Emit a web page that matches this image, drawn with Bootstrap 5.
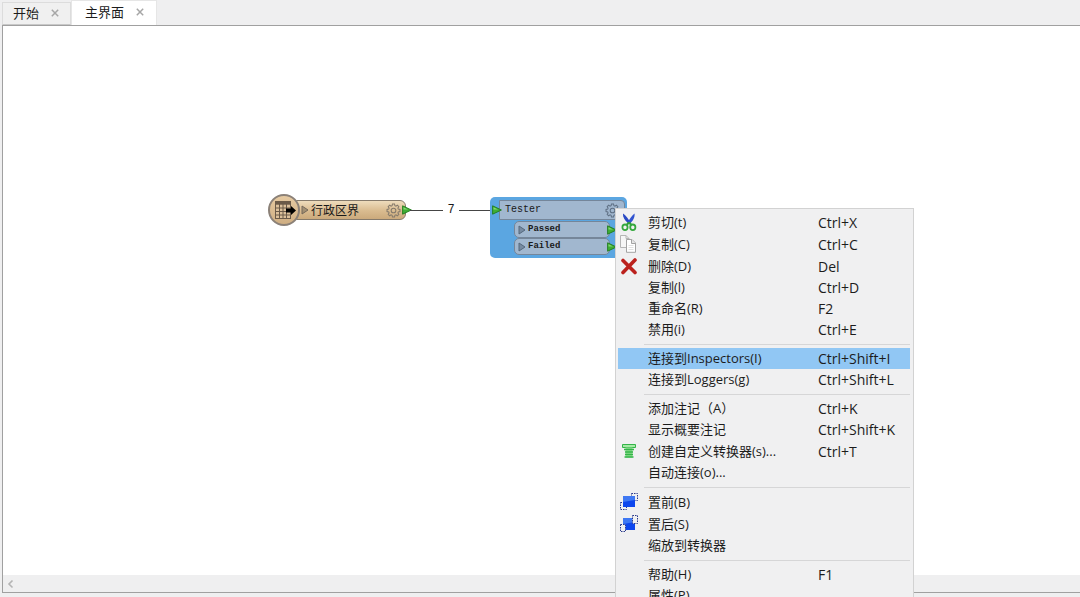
<!DOCTYPE html>
<html lang="zh-CN">
<head>
<meta charset="utf-8">
<meta name="viewport" content="width=device-width, initial-scale=1">
<title>主界面</title>
<link href="https://cdn.jsdelivr.net/npm/bootstrap@5.3.0/dist/css/bootstrap.min.css" rel="stylesheet">
<style>
  body { background: #efeff0; color: #1c1c1c; font: 13px/20px "Open Sans", "Noto Sans CJK SC", sans-serif; }
  button { font: inherit; color: inherit; }

  /* document tabs */
  .doc-tabs { height: 25px; padding: 0 0 0 2px; border: 0; }
  .doc-tab { height: 23px; padding: 0 7px 2px 10px; border: 1px solid #dcdcdc; border-bottom-color: #c8c8c8; background: #f0f0f0; }
  .doc-tab.current { height: 25px; padding: 0 8px 2px 13px; background: #fff; border-color: #e6e6e6; border-bottom: 0; }
  .doc-tab button { line-height: 20px; }
  .tab-close svg { display: block; width: 8px; height: 8px; }

  /* workspace canvas */
  .workspace { margin: 0 0 4px 2px; border: 1px solid #a0a0a0; border-right: 0; background: #fff; min-height: 0; }
  .hscroll { height: 17px; background: #efeff0; padding-left: 4px; }

  .flow-node { position: absolute; font-family: "Liberation Mono", "Noto Sans CJK SC", monospace; color: #1a1a1a; }
  .source-node { left: 265px; top: 168px; width: 144px; height: 32px; }
  .source-dial { width: 32px; height: 32px; border: 2px solid #8b8178; border-radius: 50%; background: linear-gradient(#e6caa2, #cfae82); z-index: 1; }
  .source-bar { height: 20px; margin-left: -4px; padding: 0 4px; border: 1px solid #857a6b; border-radius: 0 6px 6px 0; background: linear-gradient(#eedcbc, #d9bb8f 55%, #cbaa7c); font-size: 12px; line-height: 18px; font-family: "Noto Sans CJK SC", sans-serif; }
  .source-port { margin-left: -4px; }
  .wire { left: 407px; top: 174px; width: 82px; height: 20px; font-size: 12px; }
  .wire-line { height: 1px; background: #454545; }

  .tester-node { left: 487px; top: 171px; width: 137px; height: 61px; padding: 3px 2px 3px 2px; border-radius: 5px; background: #5ba6e1; }
  .tester-head { height: 20px; margin-left: -3px; padding: 0 4px 0 5px; border: 1px solid #75869a; border-radius: 0 4px 4px 0; background: #a1b7cf; font-size: 10px; line-height: 18px; }
  .tester-out { height: 17px; width: 96px; padding-left: 3px; border: 1px solid #75869a; border-radius: 5px; background: #a1b7cf; font-size: 9px; line-height: 15px; }
  .tester-ports { padding: 1px 0 0 22px; }
  .tester-ports .port { margin-left: -3px; }
  .port { width: 10px; height: 10px; flex: none; }
  .twisty { width: 8px; height: 10px; margin-right: 2px; flex: none; }
  .gear { width: 15px; height: 15px; flex: none; }

  /* context menu */
  .context-menu { position: absolute; left: 615px; top: 208px; width: 299px; padding: 2px 3px 2px 2px; background: #f0f0f1; border: 1px solid #d2d2d2; z-index: 5; }
  .menu-row { display: grid; grid-template-columns: 30px 170px 1fr; align-items: center; width: 100%; height: 21px; padding: 0; border: 0; background: transparent; text-align: left; line-height: 21px; white-space: nowrap; }
  .menu-row.with-icon { height: 22px; }
  .menu-row.hot { background: #91c7f4; }
  .menu-key { font-size: 14px; }
  .menu-icon { display: block; width: 18px; height: 18px; margin-left: 2px; }
  .menu-rule { height: 1px; margin: 4px 0 3px 26px; background: #d6d6d7; }
</style>
</head>
<body class="vh-100 d-flex flex-column overflow-hidden position-relative">

<svg width="0" height="0" class="position-absolute" aria-hidden="true">
  <symbol id="i-gear" viewBox="0 0 16 16">
    <g transform="translate(8 8)" fill="none" stroke="currentColor" stroke-width="1.1">
      <path d="M-1.5-5.1-1.1-6.9H1.1L1.5-5.1 2.55-4.67 4.1-5.66 5.66-4.1 4.67-2.55 5.1-1.5 6.9-1.1V1.1L5.1 1.5 4.67 2.55 5.66 4.1 4.1 5.66 2.55 4.67 1.5 5.1 1.1 6.9H-1.1L-1.5 5.1-2.55 4.67-4.1 5.66-5.66 4.1-4.67 2.55-5.1 1.5-6.9 1.1V-1.1L-5.1-1.5-4.67-2.55-5.66-4.1-4.1-5.66-2.55-4.67Z"/>
      <circle r="2.5"/>
    </g>
  </symbol>
  <symbol id="i-port" viewBox="0 0 10 10"><path d="M.6 .8 9.4 5 .6 9.2Z" fill="#3fae35" stroke="#1f7a1c" stroke-width=".9"/><path d="M1.5 2.2 6 4.4H1.5Z" fill="#84d873"/></symbol>
  <symbol id="i-twisty" viewBox="0 0 8 10"><path d="M1 1 7 5 1 9Z" fill="currentColor" fill-opacity=".55" stroke="currentColor"/></symbol>
  <symbol id="i-close" viewBox="0 0 8 8"><path d="M.8 .8 7.2 7.2M7.2 .8 .8 7.2" stroke="#a6a6a6" stroke-width="1.5"/></symbol>
</svg>

<nav class="doc-tabs d-flex align-items-end flex-shrink-0">
  <div class="doc-tab d-flex align-items-center">
    <button type="button" class="border-0 bg-transparent p-0 me-2">开始</button>
    <button type="button" class="tab-close border-0 bg-transparent p-1" aria-label="关闭 开始"><svg><use href="#i-close"/></svg></button>
  </div>
  <div class="doc-tab current d-flex align-items-center">
    <button type="button" class="border-0 bg-transparent p-0 me-2">主界面</button>
    <button type="button" class="tab-close border-0 bg-transparent p-1" aria-label="关闭 主界面"><svg><use href="#i-close"/></svg></button>
  </div>
</nav>

<main class="workspace flex-grow-1 d-flex flex-column">
  <div class="flex-grow-1 position-relative">
    <div class="flow-node source-node d-flex align-items-center">
      <div class="source-dial d-flex align-items-center justify-content-center flex-shrink-0">
        <svg width="24" height="22" viewBox="0 0 24 22" aria-hidden="true">
          <rect x="3.5" y="2.5" width="15" height="17" fill="#dcc09a" stroke="#6b5a48"/>
          <path d="M3.5 4.2h15" stroke="#6b5a48" stroke-width="3"/>
          <path d="M3.5 9h15M3.5 12.5h15M3.5 16h15M7.5 4v15.500M11 4v15.500M14.500 4v15.500" stroke="#6b5a48" fill="none"/>
          <path d="M14 9.500h5V7l5 4.500L19 16v-2.500h-5Z" fill="#000"/>
        </svg>
      </div>
      <div class="source-bar flex-grow-1 d-flex align-items-center">
        <svg class="twisty" style="color:#75695a" aria-hidden="true"><use href="#i-twisty"/></svg>
        <span class="flex-grow-1">行政区界</span>
        <svg class="gear" style="color:#857a6b" aria-hidden="true"><use href="#i-gear"/></svg>
      </div>
      <svg class="port source-port" aria-hidden="true"><use href="#i-port"/></svg>
    </div>

    <div class="flow-node wire d-flex align-items-center">
      <span class="wire-line flex-grow-1"></span><span class="px-1">7</span><span class="wire-line flex-grow-1"></span>
    </div>

    <div class="flow-node tester-node">
      <div class="d-flex align-items-center">
        <svg class="port position-relative z-1" aria-hidden="true"><use href="#i-port"/></svg>
        <div class="tester-head flex-grow-1 d-flex align-items-center">
          <span class="flex-grow-1">Tester</span>
          <svg class="gear" style="color:#5f7084" aria-hidden="true"><use href="#i-gear"/></svg>
        </div>
      </div>
      <div class="tester-ports d-flex flex-column">
        <div class="d-flex align-items-center">
          <div class="tester-out d-flex align-items-center fw-bold"><svg class="twisty" style="color:#55687d" aria-hidden="true"><use href="#i-twisty"/></svg>Passed</div>
          <svg class="port" aria-hidden="true"><use href="#i-port"/></svg>
        </div>
        <div class="d-flex align-items-center">
          <div class="tester-out d-flex align-items-center fw-bold"><svg class="twisty" style="color:#55687d" aria-hidden="true"><use href="#i-twisty"/></svg>Failed</div>
          <svg class="port" aria-hidden="true"><use href="#i-port"/></svg>
        </div>
      </div>
    </div>
  </div>
  <div class="hscroll d-flex align-items-center flex-shrink-0">
    <svg width="7" height="10" viewBox="0 0 7 10" aria-hidden="true"><path d="M5.500 1.500 2 5l3.500 3.500" fill="none" stroke="#b4b4b4" stroke-width="1.600"/></svg>
  </div>
</main>

<div class="context-menu" role="menu">
  <button type="button" role="menuitem" class="menu-row with-icon">
    <svg class="menu-icon" viewBox="0 0 18 18" aria-hidden="true">
      <path d="M3 .5C2.600 4 5 8 9 11l1.500-1.500C8.500 6 6 2.500 3 .5Z" fill="#2a49c4"/>
      <path d="M14.500 .5C15.200 4 13 8 9 11.500L7.500 9.500C9.500 6 12 2.500 14.500 .5Z" fill="#3153d0"/>
      <path d="M9 9.500 6.500 12M9 9.500 11.500 12" stroke="#2f9e38" stroke-width="2"/>
      <ellipse cx="5" cy="14.300" rx="2.600" ry="2.800" fill="none" stroke="#35a83d" stroke-width="1.800"/>
      <ellipse cx="12.800" cy="14.300" rx="2.600" ry="2.800" fill="none" stroke="#35a83d" stroke-width="1.800"/>
    </svg><span>剪切(t)</span><span class="menu-key">Ctrl+X</span></button>
  <button type="button" role="menuitem" class="menu-row with-icon">
    <svg class="menu-icon" viewBox="0 0 18 18" aria-hidden="true">
      <path d="M.5 .5H6L9 3.500V12.500H.5Z" fill="#f6f6f6" stroke="#b5b5b5"/>
      <path d="M6 .5V3.500H9" fill="none" stroke="#b5b5b5"/>
      <path d="M6.500 4.500H12L15.500 8V17.300H6.500Z" fill="#fff" stroke="#a3a3a3"/>
      <path d="M11.500 4.500V8.500H15.500" fill="#e6e6e6" stroke="#a3a3a3"/>
      <path d="M8.500 10.500h5M8.500 12.500h5M8.500 14.500h5" stroke="#e1e1e1"/>
    </svg><span>复制(C)</span><span class="menu-key">Ctrl+C</span></button>
  <button type="button" role="menuitem" class="menu-row with-icon">
    <svg class="menu-icon" viewBox="0 0 18 18" aria-hidden="true"><path d="M3 3.500 15 15.500M15 3 3 15.500" stroke="#bb211d" stroke-width="3.600" stroke-linecap="round"/></svg><span>删除(D)</span><span class="menu-key">Del</span></button>
  <button type="button" role="menuitem" class="menu-row"><i></i><span>复制(l)</span><span class="menu-key">Ctrl+D</span></button>
  <button type="button" role="menuitem" class="menu-row"><i></i><span>重命名(R)</span><span class="menu-key">F2</span></button>
  <button type="button" role="menuitem" class="menu-row"><i></i><span>禁用(i)</span><span class="menu-key">Ctrl+E</span></button>
  <div class="menu-rule" role="separator"></div>
  <button type="button" role="menuitem" class="menu-row hot"><i></i><span>连接到Inspectors(I)</span><span class="menu-key">Ctrl+Shift+I</span></button>
  <button type="button" role="menuitem" class="menu-row"><i></i><span>连接到Loggers(g)</span><span class="menu-key">Ctrl+Shift+L</span></button>
  <div class="menu-rule" role="separator"></div>
  <button type="button" role="menuitem" class="menu-row"><i></i><span>添加注记（A）</span><span class="menu-key">Ctrl+K</span></button>
  <button type="button" role="menuitem" class="menu-row"><i></i><span>显示概要注记</span><span class="menu-key">Ctrl+Shift+K</span></button>
  <button type="button" role="menuitem" class="menu-row with-icon">
    <svg class="menu-icon" viewBox="0 0 18 18" aria-hidden="true">
      <path d="M2.500 2.500h13v3h-13Z" fill="#a5eba5" stroke="#34b44a"/>
      <path d="M5.500 5.500h7v10h-7Z" fill="#8fe08f"/>
      <path d="M4 7.500h10M5 10h8M5 12.500h8M4.500 15h9" stroke="#34b44a" stroke-width="1.400"/>
    </svg><span>创建自定义转换器(s)...</span><span class="menu-key">Ctrl+T</span></button>
  <button type="button" role="menuitem" class="menu-row"><i></i><span>自动连接(o)...</span></button>
  <div class="menu-rule" role="separator"></div>
  <button type="button" role="menuitem" class="menu-row with-icon">
    <svg class="menu-icon" viewBox="0 0 18 18" aria-hidden="true">
      <path d="M11.500 .5h6v7h-6ZM.5 9.500h6v7h-6Z" fill="none" stroke="#2b3a8c" stroke-dasharray="1.500 1"/>
      <path d="M3 3h12v11H3Z" fill="#0d46ee"/><path d="M3 3h12v4L3 9Z" fill="#3f78f3"/>
    </svg><span>置前(B)</span></button>
  <button type="button" role="menuitem" class="menu-row with-icon">
    <svg class="menu-icon" viewBox="0 0 18 18" aria-hidden="true">
      <path d="M3 3h12v12H3Z" fill="#0d46ee"/><path d="M3 3h12v4L3 9Z" fill="#3f78f3"/>
      <path d="M12.500 .5h5v8h-5ZM.5 9.500h5v7h-5Z" fill="#f0f0f1" stroke="#2b3a8c" stroke-dasharray="1.500 1"/>
    </svg><span>置后(S)</span></button>
  <button type="button" role="menuitem" class="menu-row"><i></i><span>缩放到转换器</span></button>
  <div class="menu-rule" role="separator"></div>
  <button type="button" role="menuitem" class="menu-row"><i></i><span>帮助(H)</span><span class="menu-key">F1</span></button>
  <button type="button" role="menuitem" class="menu-row"><i></i><span>属性(P)</span></button>
</div>

<script src="https://cdn.jsdelivr.net/npm/bootstrap@5.3.0/dist/js/bootstrap.bundle.min.js"></script>
</body>
</html>
